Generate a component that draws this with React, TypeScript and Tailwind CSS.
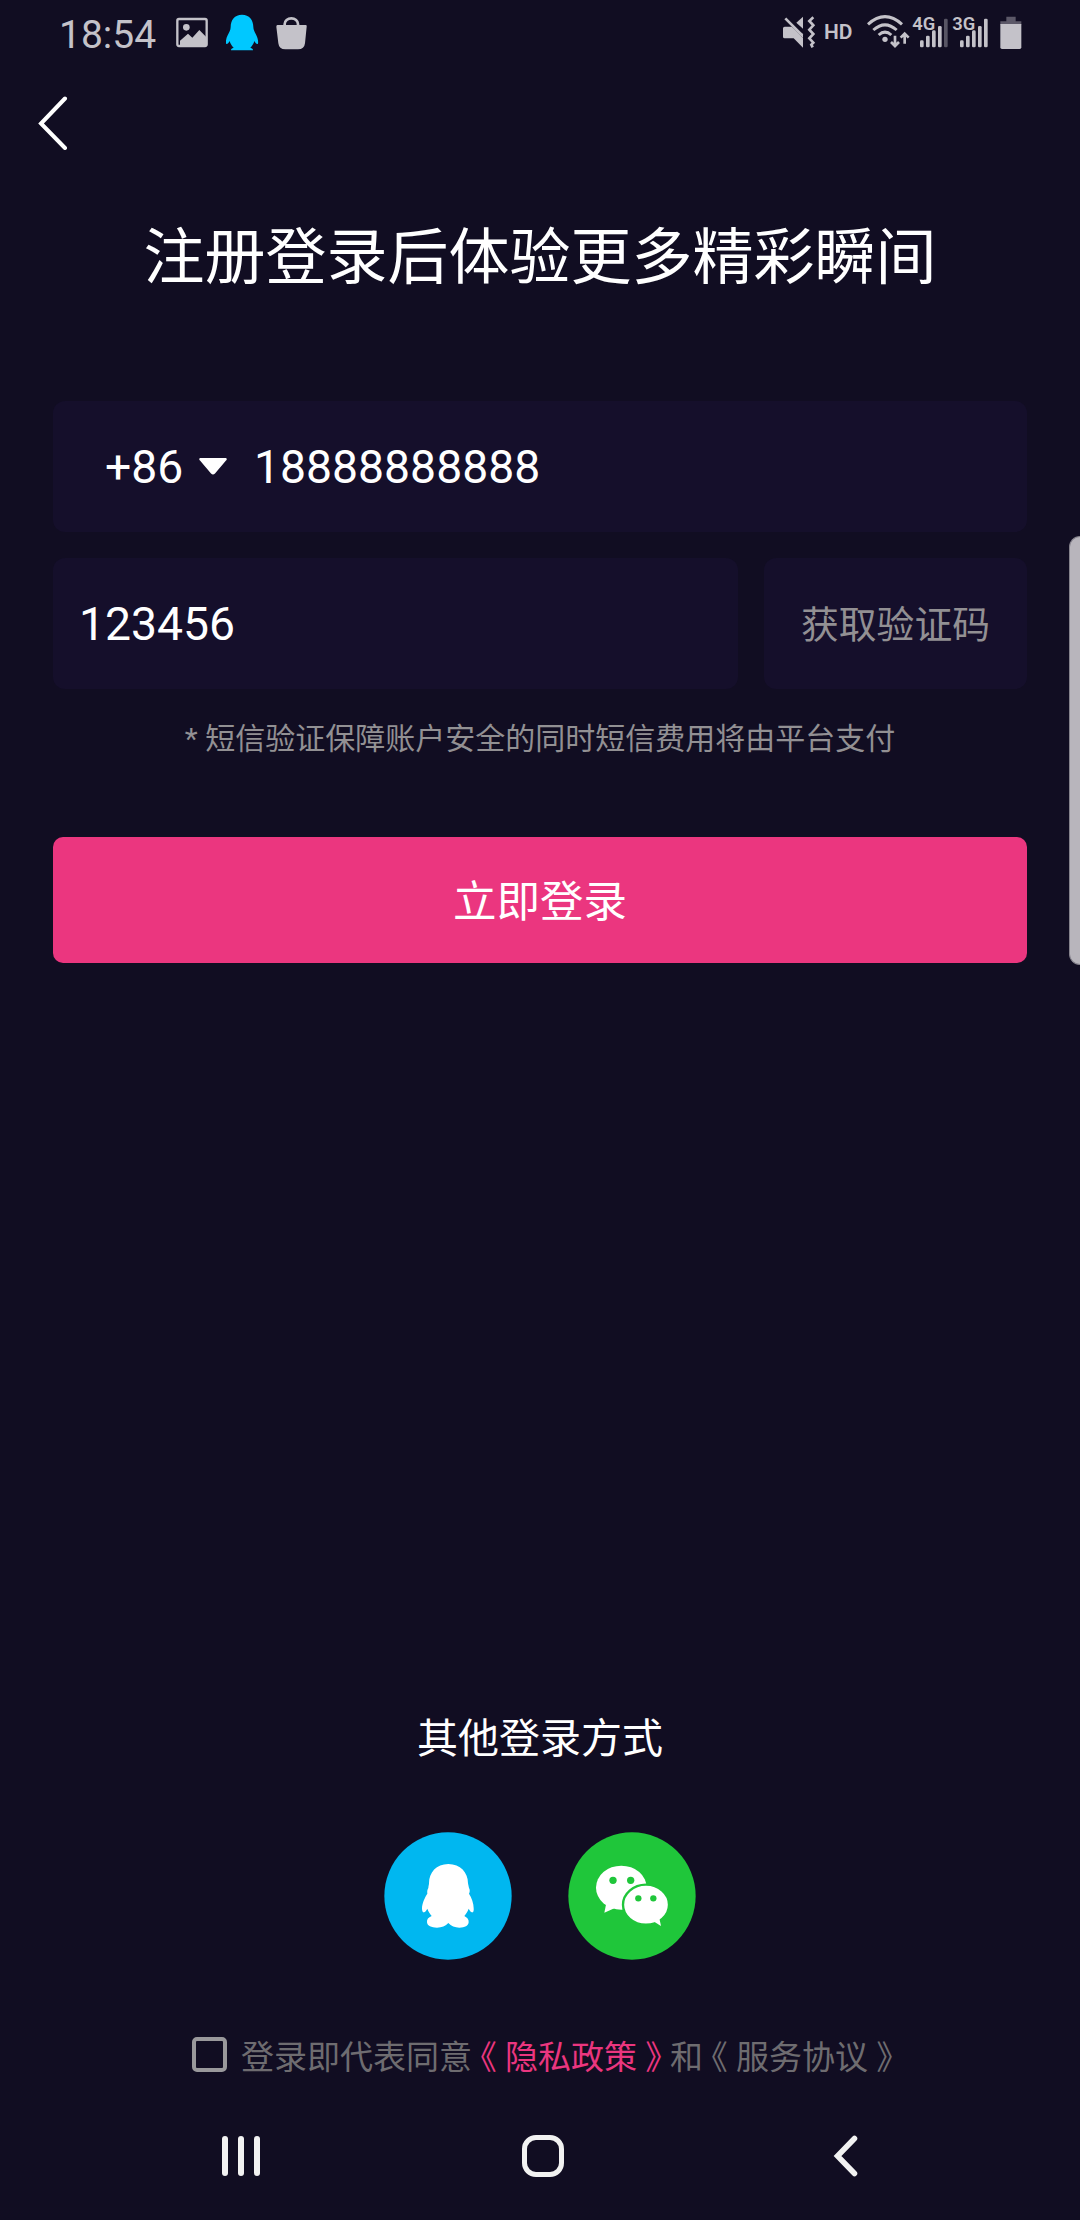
import { useState, type ReactNode } from "react";

// Signal bars with the network generation label overlapping the top-left corner.
function Signal({ label, dimLast = false }: { label: string; dimLast?: boolean }) {
  const tops = [122, 108, 92, 79, 57];
  return (
    <svg width="38" height="39" viewBox="456 31 114 117" fill="#c4c2c9">
      {tops.map((top, i) => (
        <rect
          key={top}
          x={480 + i * 18}
          y={top}
          width="11"
          height={143 - top}
          rx="4"
          opacity={dimLast && i === 4 ? 0.4 : 1}
        />
      ))}
      <text x="457" y="92" fontSize="56" fontWeight="600" fontFamily="Roboto" textLength="69" lengthAdjust="spacingAndGlyphs" stroke="#110d22" strokeWidth="5" paintOrder="stroke">
        {label}
      </text>
    </svg>
  );
}

function StatusBar() {
  return (
    <div className="flex h-[66px] shrink-0 items-start text-[#c4c2c9]">
      <div className="ml-[59px] mt-[15px] w-[117px] text-[39px] leading-[40px]">18:54</div>
      {/* gallery */}
      <svg className="mt-[17px]" width="32" height="31" viewBox="528 51 96 93">
        <rect x="532" y="57" width="88" height="81" rx="5" fill="none" stroke="#c4c2c9" strokeWidth="7" />
        <circle cx="559" cy="82" r="10" fill="#c4c2c9" />
        <path d="M540 122l24-21 13 12 21-23 20 20v26h-78z" fill="#c4c2c9" />
      </svg>
      {/* QQ notification */}
      <svg className="ml-[18px] mt-[14px]" width="33" height="37" viewBox="678 42 99 111" fill="#00c8ff">
        <path d="M726 44c-22 0-34 16-34 37 0 9-5 16-9 25-5 10-7 23-4 26 3 2 8-5 10-9 2 8 6 14 12 20-6 2-9 5-8 8h66c1-3-2-6-8-8 6-6 10-12 12-20 2 4 7 11 10 9 3-3 1-16-4-26-4-9-9-16-9-25 0-21-12-37-34-37z" />
      </svg>
      {/* shopping bag */}
      <svg className="ml-[17px] mt-[16px]" width="31" height="34" viewBox="830 47 93 102">
        <path d="M856 78v-7a20 17 0 0 1 40 0v7" fill="none" stroke="#c4c2c9" strokeWidth="8" />
        <path d="M834 74h85q4 0 3 5l-5 50q-2 18-21 18h-38q-19 0-21-18l-6-50q0-5 3-5z" fill="#c4c2c9" />
      </svg>
      <div className="ml-auto mr-[58px] flex items-start">
        {/* muted, vibrate */}
        <svg className="mt-[16px]" width="33" height="33" viewBox="66 48 99 99" fill="#c4c2c9">
          <path d="M71 80h21l34 34v29l-28-28H71q-5 0-5-5V85q0-5 5-5z" />
          <path d="M92 80l34 34v-12z" />
          <path d="M126 50v36l-20-18z" />
          <path d="M73 55l51 51" fill="none" stroke="#c4c2c9" strokeWidth="8" />
          <path d="M157 52l-12 11 12 13-12 13 12 13-12 13 12 13-6 6 4 8" fill="none" stroke="#c4c2c9" strokeWidth="8" />
        </svg>
        <div className="ml-[8px] mt-[22px] w-[43px] text-[21px] font-semibold leading-[21px]">HD</div>
        {/* wifi with traffic arrows */}
        <svg className="mt-[14px]" width="43" height="35" viewBox="322 42 129 105" fill="none" stroke="#c4c2c9" strokeWidth="9">
          <path d="M325 73q51-46 102 0M341 90q35-31 70 0M357 105q19-17 38 0" />
          <circle cx="376" cy="118" r="8" fill="#c4c2c9" stroke="none" />
          <path d="M406 107v28M394 126l12 12 12-12" strokeWidth="8" />
          <path d="M435 131v-28M423 113l12-12 12 12" strokeWidth="8" />
        </svg>
        <div className="ml-[2px] mt-[10px] flex gap-[2px]">
          <Signal label="4G" dimLast />
          <Signal label="3G" />
        </div>
        {/* battery */}
        <svg className="ml-[10px] mt-[16px]" width="22" height="33" viewBox="719 48 66 99">
          <path d="M738 50h28v14h17v10h-63V64h18z" fill="#5c5868" />
          <path d="M720 72h63v70q0 5-5 5h-53q-5 0-5-5z" fill="#c4c2c9" />
        </svg>
      </div>
    </div>
  );
}

function QQLogo() {
  return (
    <svg width="128" height="128" viewBox="71 457 384 384">
      <circle cx="263" cy="649" r="191" fill="#00b7f0" />
      <path
        d="M264 553c-36 0-58 25-58 58 0 6-2 8-2 14-3 5-4 10-3 17-8 12-16 30-16 44 0 10 3 13 6 12 4-1 8-7 10-11 3 8 7 15 13 22-10 4-15 10-14 19 1 11 13 16 30 16 14 0 26-5 34-14 8 9 20 14 33 14 17 0 27-6 28-16 1-9-5-15-13-19 6-7 10-14 13-22 2 4 6 10 10 11 4 1 6-4 5-13 0-14-6-31-14-43 3-6 3-12 0-17-1-6-2-8-3-14 0-33-23-58-59-58z"
        fill="#fff"
      />
    </svg>
  );
}

function WeChatLogo() {
  return (
    <svg width="128" height="128" viewBox="623 457 384 384">
      <circle cx="815" cy="649" r="191" fill="#1fc63a" />
      <ellipse cx="783" cy="624" rx="76" ry="66" fill="#fff" />
      <path d="M738 670l-6 29 30-13z" fill="#fff" />
      <ellipse cx="857" cy="675" rx="69" ry="60" fill="#fff" stroke="#1fc63a" strokeWidth="7" />
      <path d="M878 724l24 15-6-28z" fill="#fff" />
      <g fill="#1fc63a">
        <circle cx="758" cy="602" r="11" />
        <circle cx="811" cy="602" r="11" />
        <circle cx="834" cy="656" r="9.5" />
        <circle cx="879" cy="656" r="9.5" />
      </g>
    </svg>
  );
}

// Policy name wrapped in half-width book-title marks, each centred in a full cell.
function DocLink({ className = "", children }: { className?: string; children: ReactNode }) {
  return (
    <button className={`flex cursor-pointer ${className}`}>
      <span className="flex w-[33px] justify-center [font-feature-settings:'halt']">《</span>
      <span>{children}</span>
      <span className="flex w-[33px] justify-center [font-feature-settings:'halt']">》</span>
    </button>
  );
}

function NavBar() {
  return (
    <div className="flex h-[128px] shrink-0 items-center text-[#f2f2f2]">
      <div className="ml-[222px] flex w-[300px] gap-[10px]">
        <span className="h-10 w-1.5 rounded-full bg-[#f2f2f2]" />
        <span className="h-10 w-1.5 rounded-full bg-[#f2f2f2]" />
        <span className="h-10 w-1.5 rounded-full bg-[#f2f2f2]" />
      </div>
      <div className="size-[42px] rounded-[14px] border-[5.5px] border-[#f2f2f2]" />
      <svg className="ml-[269px]" width="26" height="42" viewBox="0 0 26 42" fill="none" stroke="currentColor" strokeWidth="5.5" strokeLinecap="round">
        <path d="M21.500 3.500L4.500 21l17 17.500" />
      </svg>
    </div>
  );
}

export default function App() {
  const [agreed, setAgreed] = useState(false);

  return (
    <div className="relative flex h-[2220px] w-[1080px] flex-col overflow-hidden bg-[#110d22] font-[Roboto,'Noto_Sans_CJK_SC',sans-serif] text-white">
      <StatusBar />

      <header className="flex h-[114px] shrink-0 items-center pl-[38px]">
        <svg width="30" height="54" viewBox="0 0 30 54" fill="none" stroke="#fff" strokeWidth="4" strokeLinecap="round">
          <path d="M27 2.500L3 27.500l24 24.500" />
        </svg>
      </header>

      <h1 className="flex h-[150px] shrink-0 items-center justify-center pt-[6px] text-[61px] leading-none">注册登录后体验更多精彩瞬间</h1>

      <form className="mx-[53px] mt-[71px]" onSubmit={(e) => e.preventDefault()}>
        <div className="flex h-[131px] items-center rounded-xl bg-[#150f2b] pl-[52px] text-[46.3px] leading-none">
          <span className="w-[94px] pt-0.5">+86</span>
          <svg width="28" height="17" viewBox="0 0 28 17" fill="#fff">
            <path d="M1 0h26q1.500 1 0 2.500L16 15.500q-2 2-4 0L1 2.500Q-.5 1 1 0z" />
          </svg>
          <span className="ml-[27px] pt-0.5">18888888888</span>
        </div>
        <div className="mt-[26px] flex h-[131px] gap-[26px]">
          <div className="flex flex-1 items-center rounded-xl bg-[#150f2b] pt-0.5 pl-[26px] text-[46.3px] leading-none">123456</div>
          <button className="w-[263px] cursor-pointer rounded-xl bg-[#150f2b] pt-1 text-[37.8px] leading-none text-[#929093]">获取验证码</button>
        </div>
        <p className="flex h-[98px] items-center justify-center pt-0.5 text-[30px] leading-none text-[#929093]">* 短信验证保障账户安全的同时短信费用将由平台支付</p>
        <button className="mt-[50px] h-[126px] w-full cursor-pointer rounded-[10px] bg-[#eb367f] pt-1.5 text-[43.5px] leading-none">立即登录</button>
      </form>

      <section className="mt-auto flex flex-col items-center">
        <h2 className="flex h-[62px] items-center pt-1 text-[41px] leading-none">其他登录方式</h2>
        <div className="mt-[64px] flex gap-[56px]">
          <QQLogo />
          <WeChatLogo />
        </div>
      </section>

      <div className="mt-[57px] flex h-[75px] shrink-0 items-center pl-[192px] text-[33px] leading-none text-[#6e6c70]">
        <button
          role="checkbox"
          aria-checked={agreed}
          onClick={() => setAgreed((a) => !a)}
          className={`mr-[14px] size-[35px] rounded-[5px] border-4 border-[#99989b] ${agreed ? "bg-[#eb367f]" : ""}`}
        />
        <div className="flex pt-[5px]">
          <span>登录即代表同意</span>
          <DocLink className="text-[#eb367f]">隐私政策</DocLink>
          <span>和</span>
          <DocLink>服务协议</DocLink>
        </div>
      </div>

      <NavBar />

      {/* edge panel handle */}
      <div className="absolute top-[536px] right-0 h-[429px] w-[11px] rounded-l-xl border border-r-0 border-[#85828c] bg-[#b8b5bc]" />
    </div>
  );
}
